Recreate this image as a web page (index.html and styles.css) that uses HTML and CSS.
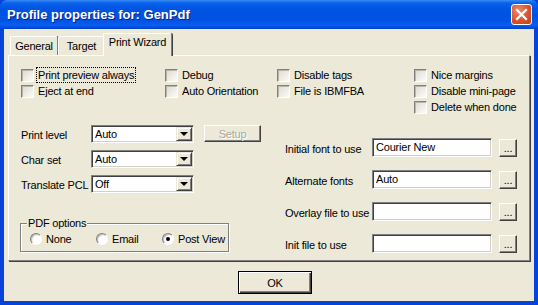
FILE: index.html
```html
<!DOCTYPE html>
<html lang="en">
  <head>
    <meta charset="UTF-8" />
    <title>Profile properties for: GenPdf</title>
    <link rel="stylesheet" href="styles.css">
  </head>
  <body>
    <div class="window">
      <div class="titlebar">
        <span class="title">Profile properties for: GenPdf</span>
        <button class="close" title="Close">
          <svg width="13" height="13" viewBox="0 0 13 13">
            <path d="M2 2 L11 11 M11 2 L2 11" stroke="#fff" stroke-width="2.2" stroke-linecap="square" />
          </svg>
        </button>
      </div>
      <div class="client">
        <div class="tabs">
          <div class="tab tab-general">General</div>
          <div class="tab tab-target">Target</div>
          <div class="tab tab-active">Print Wizard</div>
        </div>
        <div class="panel">
          <div class="checks">
            <label class="check"><span class="box"></span><span class="focus">Print preview always</span></label>
            <label class="check"><span class="box"></span>Debug</label>
            <label class="check"><span class="box"></span>Disable tags</label>
            <label class="check"><span class="box"></span>Nice margins</label>
            <label class="check"><span class="box"></span>Eject at end</label>
            <label class="check"><span class="box"></span>Auto Orientation</label>
            <label class="check"><span class="box"></span>File is IBMFBA</label>
            <label class="check"><span class="box"></span>Disable mini-page</label>
            <label class="check last"><span class="box"></span>Delete when done</label>
          </div>
          <div class="lower">
            <div class="left">
              <div class="row">
                <span class="lbl">Print level</span>
                <div class="combo"><span>Auto</span><span class="drop"></span></div>
                <button class="btn setup" disabled>Setup</button>
              </div>
              <div class="row">
                <span class="lbl">Char set</span>
                <div class="combo"><span>Auto</span><span class="drop"></span></div>
              </div>
              <div class="row">
                <span class="lbl">Translate PCL</span>
                <div class="combo"><span>Off</span><span class="drop"></span></div>
              </div>
              <fieldset class="group">
                <legend>PDF options</legend>
                <div class="radios">
                  <label class="radio"><span class="dot"></span>None</label>
                  <label class="radio"><span class="dot"></span>Email</label>
                  <label class="radio"><span class="dot on"></span>Post View</label>
                </div>
              </fieldset>
            </div>
            <div class="right">
              <div class="row">
                <span class="lbl wide">Initial font to use</span>
                <div class="edit">Courier New</div>
                <button class="btn dots">...</button>
              </div>
              <div class="row">
                <span class="lbl wide">Alternate fonts</span>
                <div class="edit">Auto</div>
                <button class="btn dots">...</button>
              </div>
              <div class="row">
                <span class="lbl wide">Overlay file to use</span>
                <div class="edit"></div>
                <button class="btn dots">...</button>
              </div>
              <div class="row">
                <span class="lbl wide">Init file to use</span>
                <div class="edit"></div>
                <button class="btn dots">...</button>
              </div>
            </div>
          </div>
        </div>
        <div class="footer">
          <button class="btn ok">OK</button>
        </div>
      </div>
    </div>
  </body>
</html>
```

FILE: styles.css
```css
* {
  box-sizing: border-box;
}
body {
  margin: 0;
  font-family: "Liberation Sans", Arial, sans-serif;
  font-size: 11px;
  letter-spacing: -0.2px;
  color: #000;
  background: #0843d9;
}
.window {
  width: 538px;
  height: 305px;
  display: flex;
  flex-direction: column;
  background: #0843d9;
  border-radius: 7px 7px 0 0;
  overflow: hidden;
}
.titlebar {
  height: 29px;
  display: flex;
  align-items: center;
  justify-content: space-between;
  padding: 0 6px 0 7px;
  background: linear-gradient(#3b8cf5 0, #0862ec 3px, #0054e3 9px, #0052e0 20px, #0a5df2 25px, #0049d6 28px, #003fc4 29px);
  color: #fff;
  font-weight: bold;
  font-size: 13px;
  letter-spacing: 0;
  text-shadow: 1px 1px #0a1f84;
}
.close {
  width: 21px;
  height: 21px;
  padding: 0;
  border: 1px solid #fff;
  border-radius: 3px;
  background: radial-gradient(circle at 35% 30%, #eb8a6c, #d9542d 55%, #bf3d17);
  display: flex;
  align-items: center;
  justify-content: center;
}
.client {
  flex: 1;
  margin: 0 4px 4px;
  padding: 4px 4px 0;
  background: #ece9d8;
  display: flex;
  flex-direction: column;
}
.tabs {
  height: 22px;
  display: flex;
  align-items: flex-end;
  padding-left: 2px;
}
.tab {
  height: 19px;
  text-align: center;
  padding-top: 3px;
  border-top: 1px solid #fff;
  border-left: 1px solid #fff;
  border-right: 1px solid #808080;
  box-shadow: 1px 0 #404040;
  border-radius: 2px 2px 0 0;
  background: #ece9d8;
}
.tab-general {
  width: 48px;
}
.tab-target {
  width: 47px;
}
.tab-active {
  width: 69px;
  height: 23px;
  margin-left: -2px;
  margin-bottom: -1px;
  padding-top: 2px;
  position: relative;
  z-index: 1;
}
.panel {
  height: 206px;
  border: 1px solid;
  border-color: #fff #808080 #808080 #fff;
  box-shadow: 1px 1px #404040;
  padding: 11px 0 0 12px;
}
.checks {
  display: grid;
  grid-template-columns: 144px 112px 137px 1fr;
  grid-auto-rows: 16px;
}
.check {
  display: flex;
  align-items: center;
  gap: 4px;
  white-space: nowrap;
}
.check.last {
  grid-column: 4;
}
.box {
  width: 13px;
  height: 13px;
  flex: none;
  border: 1px solid;
  border-color: #808080 #fff #fff #808080;
  box-shadow: inset 1px 1px #b9b7ab;
  background: linear-gradient(135deg, #dcdad0, #fbfbf9);
}
.focus {
  outline: 1px dotted #000;
  outline-offset: 1px;
}
.lower {
  display: flex;
}
.left {
  width: 264px;
  margin-top: 10px;
  display: flex;
  flex-direction: column;
  gap: 7px;
}
.right {
  margin-top: 23px;
  display: flex;
  flex-direction: column;
  gap: 13px;
}
.row {
  display: flex;
  align-items: flex-end;
}
.lbl {
  width: 70px;
  line-height: 13px;
  padding-bottom: 1px;
  white-space: nowrap;
}
.lbl.wide {
  width: 87px;
}
.combo {
  width: 103px;
  height: 18px;
  display: flex;
  justify-content: space-between;
  padding: 2px 2px 2px 3px;
  border: 1px solid;
  border-color: #808080 #fff #fff #808080;
  box-shadow: inset 1px 1px #404040, inset -1px -1px #d4d0c8;
  background: #fff;
  line-height: 12px;
}
.drop {
  width: 16px;
  height: 14px;
  margin: -1px -1px 0 0;
  background: #ece9d8;
  border: 1px solid;
  border-color: #ece9d8 #404040 #404040 #ece9d8;
  box-shadow: inset 1px 1px #fff, inset -1px -1px #808080;
  display: flex;
  align-items: center;
  justify-content: center;
}
.drop::after {
  content: "";
  border-top: 4px solid #000;
  border-left: 4px solid transparent;
  border-right: 4px solid transparent;
}
.btn {
  font-family: inherit;
  font-size: 11px;
  letter-spacing: -0.2px;
  padding: 0;
  background: #ece9d8;
  border: 1px solid;
  border-color: #fff #404040 #404040 #fff;
  box-shadow: inset -1px -1px #808080;
  color: #000;
}
.setup {
  width: 57px;
  height: 17px;
  margin: 0 0 1px 10px;
  color: #aca899;
  text-shadow: 1px 1px #fff;
}
.edit {
  width: 120px;
  height: 19px;
  padding: 2px 3px;
  border: 1px solid;
  border-color: #808080 #fff #fff #808080;
  box-shadow: inset 1px 1px #404040, inset -1px -1px #d4d0c8;
  background: #fff;
  line-height: 13px;
}
.dots {
  width: 18px;
  height: 18px;
  margin-left: 7px;
  line-height: 10px;
}
.group {
  margin: 17px 0 0 -1px;
  width: 208px;
  padding: 2px 0 5px 9px;
  border: 1px solid #808080;
  box-shadow: inset 1px 1px #fff, 1px 1px #fff;
}
.group legend {
  padding: 0 1px;
  margin-left: -3px;
  line-height: 13px;
  background: #ece9d8;
}
.radios {
  display: flex;
  height: 14px;
}
.radio {
  width: 66px;
  display: flex;
  align-items: center;
  gap: 4px;
  white-space: nowrap;
}
.dot {
  width: 12px;
  height: 12px;
  flex: none;
  border-radius: 50%;
  border: 1px solid;
  border-color: #808080 #fff #fff #808080;
  box-shadow: inset 1px 1px #c2c0b5;
  background: radial-gradient(circle at 65% 65%, #fff 40%, #e2e0d6);
  display: flex;
  align-items: center;
  justify-content: center;
}
.dot.on::after {
  content: "";
  width: 4px;
  height: 4px;
  border-radius: 50%;
  background: #000;
}
.footer {
  display: flex;
  justify-content: center;
  padding: 10px 0 0 12px;
}
.ok {
  width: 74px;
  height: 23px;
  border: 1px solid #000;
  box-shadow: inset 1px 1px #fff, inset -1px -1px #404040, inset -2px -2px #808080;
}
```
